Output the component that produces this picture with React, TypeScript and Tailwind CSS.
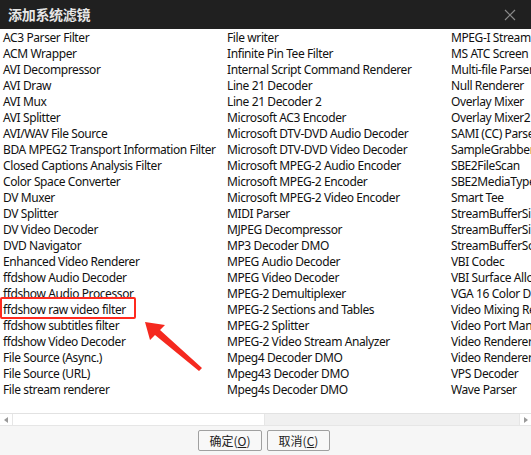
import React from 'react';

const col1 = [
  'AC3 Parser Filter',
  'ACM Wrapper',
  'AVI Decompressor',
  'AVI Draw',
  'AVI Mux',
  'AVI Splitter',
  'AVI/WAV File Source',
  'BDA MPEG2 Transport Information Filter',
  'Closed Captions Analysis Filter',
  'Color Space Converter',
  'DV Muxer',
  'DV Splitter',
  'DV Video Decoder',
  'DVD Navigator',
  'Enhanced Video Renderer',
  'ffdshow Audio Decoder',
  'ffdshow Audio Processor',
  'ffdshow raw video filter',
  'ffdshow subtitles filter',
  'ffdshow Video Decoder',
  'File Source (Async.)',
  'File Source (URL)',
  'File stream renderer',
];

const col2 = [
  'File writer',
  'Infinite Pin Tee Filter',
  'Internal Script Command Renderer',
  'Line 21 Decoder',
  'Line 21 Decoder 2',
  'Microsoft AC3 Encoder',
  'Microsoft DTV-DVD Audio Decoder',
  'Microsoft DTV-DVD Video Decoder',
  'Microsoft MPEG-2 Audio Encoder',
  'Microsoft MPEG-2 Encoder',
  'Microsoft MPEG-2 Video Encoder',
  'MIDI Parser',
  'MJPEG Decompressor',
  'MP3 Decoder DMO',
  'MPEG Audio Decoder',
  'MPEG Video Decoder',
  'MPEG-2 Demultiplexer',
  'MPEG-2 Sections and Tables',
  'MPEG-2 Splitter',
  'MPEG-2 Video Stream Analyzer',
  'Mpeg4 Decoder DMO',
  'Mpeg43 Decoder DMO',
  'Mpeg4s Decoder DMO',
];

const col3 = [
  'MPEG-I Stream Splitter',
  'MS ATC Screen Decoder 1',
  'Multi-file Parser',
  'Null Renderer',
  'Overlay Mixer',
  'Overlay Mixer2',
  'SAMI (CC) Parser',
  'SampleGrabber',
  'SBE2FileScan',
  'SBE2MediaTypeProfile',
  'Smart Tee',
  'StreamBufferSink',
  'StreamBufferSink2',
  'StreamBufferSource',
  'VBI Codec',
  'VBI Surface Allocator',
  'VGA 16 Color Ditherer',
  'Video Mixing Renderer 9',
  'Video Port Manager',
  'Video Renderer',
  'Video Renderer',
  'VPS Decoder',
  'Wave Parser',
];

function Column({ items }: { items: string[] }) {
  return (
    <div className="w-[224px] shrink-0 pl-[3px]">
      {items.map((t, i) => (
        <div key={i} className="h-4 leading-4 whitespace-nowrap">
          {t}
        </div>
      ))}
    </div>
  );
}

export default function App() {
  return (
    <div
      className="w-[531px] h-[455px] flex flex-col bg-white text-black overflow-hidden relative"
      style={{ fontFamily: '"Segoe UI", "Noto Sans", "Noto Sans CJK SC", sans-serif' }}
    >
      {/* title bar */}
      <div className="h-[29px] bg-[#202020] flex items-center justify-between pl-2 pr-[15px] shrink-0">
        <span
          className="text-[14px] font-bold text-[#e6e6e6] tracking-[-0.3px]"
          style={{ fontFamily: '"Noto Sans CJK SC", sans-serif' }}
        >
          添加系统滤镜
        </span>
        <svg width="12" height="12" viewBox="0 0 12 12" className="text-[#8a8a8a]">
          <path d="M1 1L11 11M11 1L1 11" stroke="currentColor" strokeWidth="1.2" />
        </svg>
      </div>

      {/* list */}
      <div className="flex h-[384px] pt-[1px] overflow-hidden text-[12px] tracking-[-0.4px] text-[#111]">
        <Column items={col1} />
        <Column items={col2} />
        <Column items={col3} />
      </div>

      {/* horizontal scrollbar */}
      <div className="h-[12px] flex border-t border-[#e2e2e2] bg-[#f0f0f0] shrink-0">
        <div className="w-[12px] bg-white flex items-center justify-center">
          <svg width="4" height="6" viewBox="0 0 4 6">
            <path d="M4 0L0 3L4 6Z" fill="#9a9a9a" />
          </svg>
        </div>
        <div className="w-[253px] bg-white border-l border-r border-[#e6e6e6]" />
        <div className="flex-1" />
        <div className="w-[12px] bg-white flex items-center justify-center border-l border-[#e6e6e6]">
          <svg width="4" height="6" viewBox="0 0 4 6">
            <path d="M0 0L4 3L0 6Z" fill="#9a9a9a" />
          </svg>
        </div>
      </div>

      {/* buttons */}
      <div
        className="flex-1 bg-[#f6f6f6] border-t border-[#e6e6e6] flex items-start gap-[5px] pl-[198px] pt-[4px] text-[12px] text-[#222]"
        style={{ fontFamily: '"Noto Sans CJK SC", sans-serif' }}
      >
        <button className="w-[64px] h-[21px] bg-[#f8f8f8] border border-[#a0a0a0] rounded-[2px] leading-none">
          确定(<span className="underline">O</span>)
        </button>
        <button className="w-[63px] h-[21px] bg-[#f8f8f8] border border-[#a0a0a0] rounded-[2px] leading-none">
          取消(<span className="underline">C</span>)
        </button>
      </div>

      {/* annotation: red box and arrow */}
      <div className="absolute left-0 top-[297px] w-[136px] h-[22px] border-2 border-[#ff2a1f] rounded-[2px]" />
      <svg className="absolute left-[140px] top-[317px]" width="66" height="56" viewBox="0 0 66 56">
        <path d="M5 5 L25 8 L20 13 L62 51 L59 54 L15 18 L10 23 Z" fill="#f5291f" />
      </svg>
    </div>
  );
}
